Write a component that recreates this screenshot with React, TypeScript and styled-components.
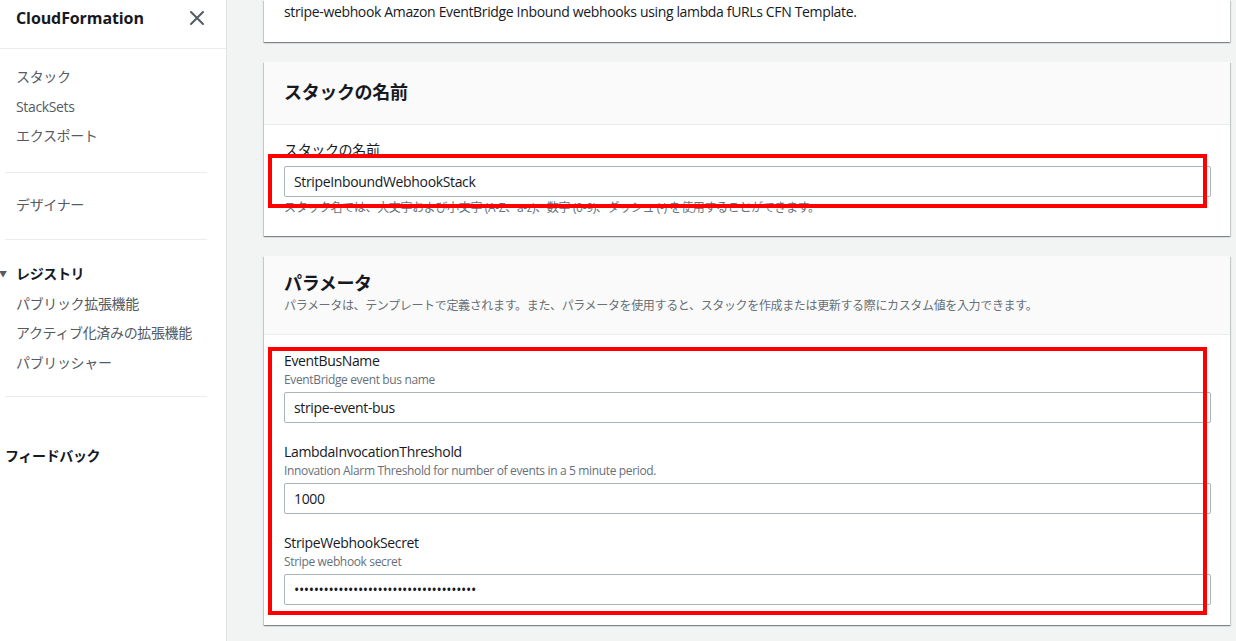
import * as React from "react";
import styled, { createGlobalStyle } from "styled-components";

const GlobalStyle = createGlobalStyle`
  html, body {
    margin: 0;
    padding: 0;
    height: 100%;
    overflow: hidden;
  }
  body {
    font-family: "Open Sans", "Noto Sans CJK JP", sans-serif;
    letter-spacing: -0.35px;
    color: #16191f;
    background: #f2f3f3;
  }
`;

const CloseIcon = () => (
  <svg width="16" height="16" viewBox="0 0 16 16" fill="none">
    <path d="M2 2 L14 14 M14 2 L2 14" stroke="#545b64" strokeWidth="2" strokeLinecap="round" />
  </svg>
);

const App = () => {
  return (
    <>
      <GlobalStyle />
      <Layout>
        <Sidebar>
          <SideHeader>
            <SideTitle>CloudFormation</SideTitle>
            <CloseButton>
              <CloseIcon />
            </CloseButton>
          </SideHeader>

          <NavSection $top={13} $bottom={21}>
            <NavItem>スタック</NavItem>
            <NavItem>StackSets</NavItem>
            <NavItem>エクスポート</NavItem>
          </NavSection>
          <Divider />
          <NavSection $top={17} $bottom={20}>
            <NavItem>デザイナー</NavItem>
          </NavSection>
          <Divider />
          <NavSection $top={19} $bottom={19}>
            <NavGroupTitle>
              <Caret>▼</Caret>
              レジストリ
            </NavGroupTitle>
            <NavItem>パブリック拡張機能</NavItem>
            <NavItem>アクティブ化済みの拡張機能</NavItem>
            <NavItem>パブリッシャー</NavItem>
          </NavSection>
          <Divider />
          <Feedback>フィードバック</Feedback>
        </Sidebar>

        <Main>
          <Card>
            <CardBody $top={1} $bottom={19}>
              <Plain>stripe-webhook Amazon EventBridge Inbound webhooks using lambda fURLs CFN Template.</Plain>
            </CardBody>
          </Card>

          <Card>
            <CardHeader $top={18} $bottom={20}>
              <CardTitle>スタックの名前</CardTitle>
            </CardHeader>
            <CardBody $top={14} $bottom={20}>
              <Field>
                <Label>スタックの名前</Label>
                <TextInput defaultValue="StripeInboundWebhookStack" readOnly />
                <Hint>スタック名では、大文字および小文字 (A-Z、a-z)、数字 (0-9)、ダッシュ (-) を使用することができます。</Hint>
              </Field>
              <Highlight style={{ top: 29, height: 54 }} />
            </CardBody>
          </Card>

          <Card>
            <CardHeader $top={15} $bottom={20}>
              <CardTitle>パラメータ</CardTitle>
              <HeaderDesc>
                パラメータは、テンプレートで定義されます。また、パラメータを使用すると、スタックを作成または更新する際にカスタム値を入力できます。
              </HeaderDesc>
            </CardHeader>
            <CardBody $top={15} $bottom={20}>
              <Field>
                <Label>EventBusName</Label>
                <Description>EventBridge event bus name</Description>
                <TextInput defaultValue="stripe-event-bus" readOnly />
              </Field>
              <Field>
                <Label>LambdaInvocationThreshold</Label>
                <Description>Innovation Alarm Threshold for number of events in a 5 minute period.</Description>
                <TextInput defaultValue="1000" readOnly />
              </Field>
              <Field>
                <Label>StripeWebhookSecret</Label>
                <Description>Stripe webhook secret</Description>
                <TextInput type="password" defaultValue="whsec_xxxxxxxxxxxxxxxxxxxxxxxxxxxxxxx" readOnly />
              </Field>
              <Highlight style={{ top: 12, height: 268 }} />
            </CardBody>
          </Card>
        </Main>
      </Layout>
    </>
  );
};

const Layout = styled.div`
  display: flex;
  width: 100vw;
  height: 100vh;
`;

const Sidebar = styled.nav`
  width: 226px;
  flex-shrink: 0;
  background: #fff;
  border-right: 1px solid #dfe3e3;
  box-sizing: content-box;
`;

const SideHeader = styled.div`
  display: flex;
  align-items: center;
  justify-content: space-between;
  height: 36px;
  padding: 0 21px 12px 16px;
  border-bottom: 1px solid #eaeded;
`;

const SideTitle = styled.div`
  font-size: 16px;
  font-weight: 700;
  letter-spacing: -0.1px;
  color: #16191f;
`;

const CloseButton = styled.div`
  display: flex;
  align-items: center;
  justify-content: center;
  width: 16px;
  height: 16px;
`;

const NavSection = styled.div<{ $top: number; $bottom: number }>`
  display: flex;
  flex-direction: column;
  padding: ${p => p.$top}px 0 ${p => p.$bottom}px 16px;
`;

const NavItem = styled.div`
  font-size: 14px;
  line-height: 21.5px;
  padding: 4px 0;
  color: #545b64;
`;

const NavGroupTitle = styled.div`
  position: relative;
  font-size: 14px;
  line-height: 21.5px;
  padding: 4px 0;
  font-weight: 700;
  color: #16191f;
`;

const Caret = styled.span`
  position: absolute;
  left: -17px;
  top: 4px;
  font-size: 8px;
  color: #545b64;
`;

const Divider = styled.div`
  height: 1px;
  margin: 0 19px 0 5px;
  background: #eaeded;
`;

const Feedback = styled.div`
  padding: 48px 0 0 5px;
  font-size: 14px;
  line-height: 22px;
  font-weight: 700;
  color: #16191f;
`;

const Main = styled.main`
  flex: 1;
  display: flex;
  flex-direction: column;
  gap: 20px;
  padding: 0 6px 0 37px;
  overflow: hidden;
`;

const Card = styled.section`
  background: #fff;
  box-shadow: 0 1px 1px 0 rgba(0, 28, 36, 0.3), 1px 1px 1px 0 rgba(0, 28, 36, 0.15),
    -1px 1px 1px 0 rgba(0, 28, 36, 0.15);
`;

const CardHeader = styled.header<{ $top: number; $bottom: number }>`
  background: #fafafa;
  border-bottom: 1px solid #eaeded;
  padding: ${p => p.$top}px 20px ${p => p.$bottom}px;
`;

const CardTitle = styled.h2`
  margin: 0;
  font-size: 18px;
  line-height: 24px;
  font-weight: 700;
  color: #16191f;
`;

const HeaderDesc = styled.p`
  margin: 3px 0 0;
  font-size: 12px;
  line-height: 16px;
  color: #687078;
`;

const CardBody = styled.div<{ $top: number; $bottom: number }>`
  position: relative;
  display: flex;
  flex-direction: column;
  gap: 18px;
  padding: ${p => p.$top}px 19px ${p => p.$bottom}px 20px;
`;

const Plain = styled.div`
  font-size: 14px;
  line-height: 22px;
  color: #16191f;
`;

const Field = styled.div`
  display: flex;
  flex-direction: column;
`;

const Label = styled.label`
  font-size: 14px;
  line-height: 22px;
  color: #16191f;
`;

const Description = styled.div`
  font-size: 12px;
  line-height: 16px;
  color: #687078;
  margin-bottom: 4px;
`;

const TextInput = styled.input`
  box-sizing: border-box;
  width: 100%;
  height: 31px;
  padding: 0 9px;
  border: 1px solid #aab7b8;
  border-radius: 2px;
  font-family: "Open Sans", "Noto Sans CJK JP", sans-serif;
  font-size: 14px;
  letter-spacing: -0.35px;
  color: #16191f;
  background: #fff;
  outline: none;

  ${Label} + & {
    margin-top: 5px;
  }
`;

const Hint = styled.div`
  margin-top: 3px;
  font-size: 12px;
  line-height: 16px;
  color: #687078;
`;

const Highlight = styled.div`
  position: absolute;
  left: 4px;
  width: 939px;
  box-sizing: border-box;
  border: 4px solid #ff0000;
  pointer-events: none;
`;

export default App;
